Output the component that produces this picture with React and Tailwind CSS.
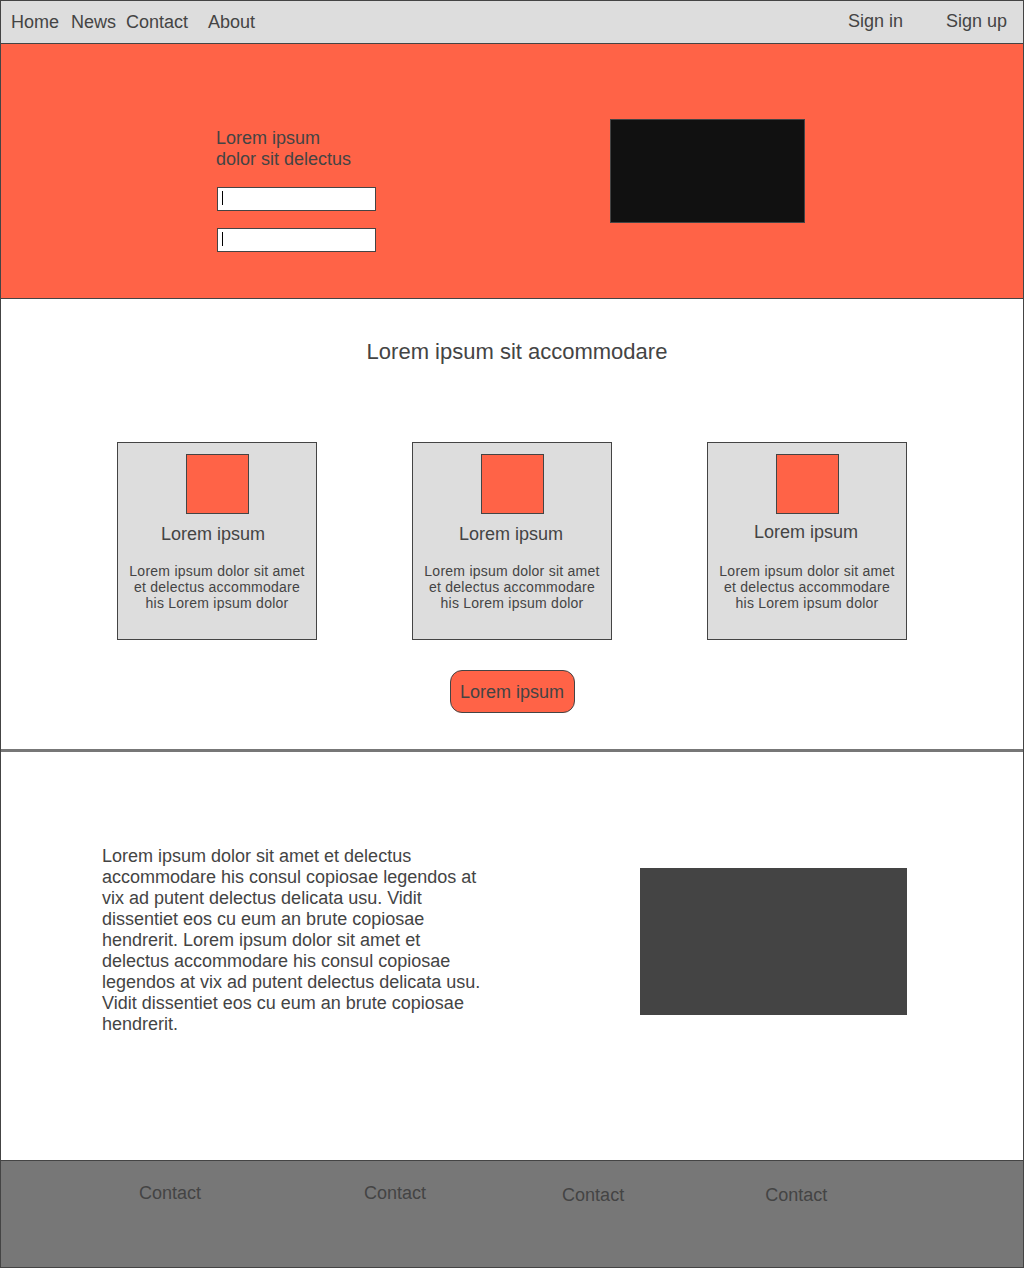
import React from "react";

const font = { fontFamily: '"Liberation Sans", Arial, sans-serif' };

const Card = ({ titleShift = "-translate-x-[1px]" }) => (
  <div className="w-[200px] h-[198px] bg-[#dddddd] border border-[#444444] flex flex-col items-center">
    <div className="mt-[11px] w-[63px] h-[60px] bg-[#ff6347] border border-[#444444]" />
    <div className={`mt-[10px] text-[18px] leading-[20px] ${titleShift}`}>Lorem ipsum</div>
    <p className="mt-[19px] text-[14px] leading-[16px] tracking-[0.25px] text-center">
      Lorem ipsum dolor sit amet
      <br />
      et delectus accommodare
      <br />
      his Lorem ipsum dolor
    </p>
  </div>
);

const InputBox = ({ className = "" }) => (
  <div className={`w-[159px] h-[24px] bg-white border border-[#444444] flex items-start ${className}`}>
    <div className="ml-[4px] mt-[3px] w-[1px] h-[14px] bg-black" />
  </div>
);

const App = () => {
  return (
    <div
      style={font}
      className="w-[1024px] h-[1268px] border border-[#444444] flex flex-col text-[#444444] overflow-hidden"
    >
      {/* nav */}
      <nav className="h-[42px] shrink-0 bg-[#dddddd] border-b border-[#444444] box-content flex items-center text-[18px] leading-[20px]">
        <a className="ml-[10px]">Home</a>
        <a className="ml-[12px]">News</a>
        <a className="ml-[10px]">Contact</a>
        <a className="ml-[20px]">About</a>
        <div className="ml-auto mr-[16px] flex gap-[43px] -translate-y-[1px]">
          <a>Sign in</a>
          <a>Sign up</a>
        </div>
      </nav>

      {/* hero */}
      <section className="h-[254px] shrink-0 bg-[#ff6347] border-b border-[#444444] box-content flex items-start">
        <div className="ml-[215px] mt-[84px] w-[162px]">
          <p className="text-[18px] leading-[21px]">
            Lorem ipsum
            <br />
            dolor sit delectus
          </p>
          <InputBox className="mt-[17px] ml-[1px]" />
          <InputBox className="mt-[17px] ml-[1px]" />
        </div>
        <div className="ml-[232px] mt-[75px] w-[195px] h-[104px] bg-[#111111] border border-[#444444]" />
      </section>

      {/* features */}
      <section className="h-[450px] shrink-0 bg-white flex flex-col">
        <h2 className="pt-[40px] text-center text-[22px] leading-[26px] translate-x-[5px]">
          Lorem ipsum sit accommodare
        </h2>
        <div className="mt-[77px] ml-[116px] flex gap-[95px]">
          <Card titleShift="-translate-x-[4px]" />
          <Card />
          <Card titleShift="-translate-x-[1px] -translate-y-[2px]" />
        </div>
        <button className="mt-[30px] self-center w-[125px] h-[43px] rounded-[12px] bg-[#ff6347] border border-[#444444] text-[18px] leading-[20px] text-[#444444]">
          Lorem ipsum
        </button>
      </section>

      <div className="h-[3px] shrink-0 bg-[#777777]" />

      {/* about */}
      <section className="h-[408px] shrink-0 bg-white flex items-start">
        <p className="ml-[101px] mt-[94px] w-[390px] text-[18px] leading-[21px]">
          Lorem ipsum dolor sit amet et delectus accommodare his consul copiosae legendos at vix ad
          putent delectus delicata usu. Vidit dissentiet eos cu eum an brute copiosae hendrerit.
          Lorem ipsum dolor sit amet et delectus accommodare his consul copiosae legendos at vix ad
          putent delectus delicata usu. Vidit dissentiet eos cu eum an brute copiosae hendrerit.
        </p>
        <div className="ml-[148px] mt-[116px] w-[267px] h-[147px] bg-[#444444]" />
      </section>

      {/* footer */}
      <footer className="flex-1 bg-[#777777] border-t border-[#444444] flex items-start text-[18px] leading-[20px]">
        <a className="ml-[138px] mt-[22px]">Contact</a>
        <a className="ml-[163px] mt-[22px]">Contact</a>
        <a className="ml-[136px] mt-[24px]">Contact</a>
        <a className="ml-[141px] mt-[24px]">Contact</a>
      </footer>
    </div>
  );
};

export default App;
